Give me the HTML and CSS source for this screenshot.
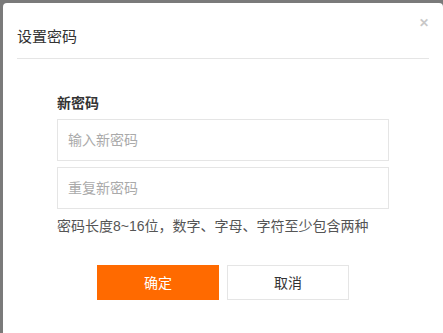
FILE: index.html
```html
<!DOCTYPE html>
<html lang="zh-CN">
<head>
  <meta charset="UTF-8">
  <title>设置密码</title>
  <link rel="stylesheet" href="styles.css">
</head>
<body>
  <div class="dialog">
    <div class="dialog-head">设置密码</div>
    <span class="close">&#x2715;</span>

    <div class="dialog-body">
      <div class="label">新密码</div>
      <input class="field" type="password" placeholder="输入新密码">
      <input class="field" type="password" placeholder="重复新密码">
      <div class="hint">密码长度8~16位，数字、字母、字符至少包含两种</div>

      <div class="actions">
        <button class="btn btn-ok">确定</button>
        <button class="btn btn-cancel">取消</button>
      </div>
    </div>
  </div>
</body>
</html>
```

FILE: styles.css
```css
* {
  box-sizing: border-box;
  font-family: "Liberation Sans", "Noto Sans CJK SC", sans-serif;
}

body {
  margin: 0;
  background-color: #7a7a7a;
  height: 333px;
  overflow: hidden;
}

.dialog {
  position: relative;
  margin: 3px 0 0 3px;
  width: 440px;
  height: 340px;
  background-color: #fff;
  border-radius: 4px;
}

.dialog-head {
  margin: 0 14px;
  padding: 24px 0 11px;
  font-size: 15px;
  line-height: 20px;
  color: #333;
  border-bottom: 1px solid #e5e5e5;
}

.close {
  position: absolute;
  top: 13px;
  right: 14px;
  font-size: 12px;
  font-weight: bold;
  color: #c8c8c8;
}

.dialog-body {
  display: flex;
  flex-direction: column;
  padding: 34px 0 0 54px;
  width: 400px;
}

.label {
  font-size: 14px;
  font-weight: bold;
  line-height: 20px;
  color: #333;
  margin-bottom: 6px;
}

.field {
  width: 332px;
  height: 42px;
  padding: 0 10px;
  border: 1px solid #e5e5e5;
  font-size: 14px;
  outline: none;
  margin-bottom: 6px;
}

.field::placeholder {
  color: #aaa;
}

.hint {
  margin-top: 1px;
  font-size: 14px;
  line-height: 20px;
  color: #555;
  white-space: nowrap;
}

.actions {
  display: flex;
  gap: 8px;
  margin: 29px 0 0 40px;
}

.btn {
  width: 122px;
  height: 35px;
  padding: 0 0 1px;
  font-size: 14px;
  border: 1px solid #e5e5e5;
  background-color: #fff;
  color: #333;
}

.btn-ok {
  background-color: #ff6a00;
  border-color: #ff6a00;
  color: #fff;
}
```
